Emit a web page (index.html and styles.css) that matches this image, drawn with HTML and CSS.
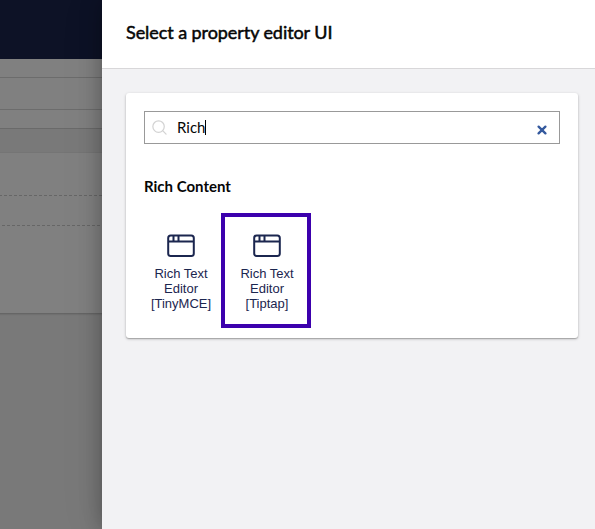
FILE: index.html
```html
<!DOCTYPE html>
<html lang="en">
<head>
<meta charset="utf-8">
<title>Select a property editor UI</title>
<link rel="stylesheet" href="styles.css">
</head>
<body>
<div class="app">
  <div class="backdrop">
    <div class="topbar"></div>
    <div class="row row-header"></div>
    <div class="row row-tabs"></div>
    <div class="row row-sub"></div>
    <div class="row row-gap"></div>
    <div class="row row-field"></div>
    <div class="row row-slot"></div>
    <div class="row row-body"></div>
  </div>
  <main class="panel">
    <header class="panel-header"><h1>Select a property editor UI</h1></header>
    <section class="box">
      <div class="search">
        <svg class="search-icon" viewBox="0 0 16 16"><circle cx="7" cy="7" r="6.1"/><path d="M11.4 11.4 15 15"/></svg>
        <span class="search-text">Rich</span><span class="caret"></span>
        <svg class="clear" viewBox="0 0 10 10"><path d="M1.6 1.6 8.4 8.4M8.4 1.6 1.6 8.4"/></svg>
      </div>
      <h2>Rich Content</h2>
      <div class="items">
        <div class="item">
          <svg class="item-icon" viewBox="0 0 28 24"><rect x="1.2" y="1.5" width="25.6" height="20.5" rx="2.5"/><path d="M1.5 7.5h25M6.5 2v5M11.5 2v5"/></svg>
          <span>Rich Text<br>Editor<br>[TinyMCE]</span>
        </div>
        <div class="item item-selected">
          <svg class="item-icon" viewBox="0 0 28 24"><rect x="1.2" y="1.5" width="25.6" height="20.5" rx="2.5"/><path d="M1.5 7.5h25M6.5 2v5M11.5 2v5"/></svg>
          <span>Rich Text<br>Editor<br>[Tiptap]</span>
        </div>
      </div>
    </section>
  </main>
</div>
</body>
</html>
```
FILE: styles.css
```css
* { box-sizing: border-box; }
body { margin: 0; font-family: Lato, "Liberation Sans", sans-serif; color: #060606; }
.app { display: flex; width: 595px; height: 529px; overflow: hidden; }
.backdrop { width: 102px; background: #797979; }
.topbar { height: 59px; background: #0d1226; }
.row { background: #808080; }
.row-header { height: 19px; border-bottom: 1px solid #6c6c6c; }
.row-tabs { height: 32px; border-bottom: 1px solid #6c6c6c; }
.row-sub { height: 19px; border-bottom: 1px solid #6a6a6a; }
.row-gap { height: 24px; background: #797979; border-bottom: 1px solid #757575; }
.row-field { height: 42px; }
.row-slot {
  height: 31px;
  background:
    repeating-linear-gradient(90deg, #666 0 2px, transparent 2px 4px, #666 4px 5px) 0 0 / 100% 1px no-repeat,
    repeating-linear-gradient(90deg, transparent 0 2px, #666 2px 5px) 0 100% / 100% 1px no-repeat,
    #808080;
}
.row-body { height: 88px; border-bottom: 1px solid #666; box-shadow: 0 1px 1px #707070; }
.panel {
  position: relative;
  width: 493px;
  background: #f2f2f4;
  box-shadow: 0 0 20px rgba(0, 0, 0, .3), 0 0 44px rgba(0, 0, 0, .08);
}
.panel-header {
  display: flex;
  align-items: center;
  height: 69px;
  padding: 0 24px 4px;
  background: #fff;
  border-bottom: 1px solid #d8d7d9;
}
h1 {
  margin: 0;
  font-size: 18px;
  line-height: 24px;
  font-weight: 400;
  letter-spacing: -.07px;
  -webkit-text-stroke: .5px currentColor;
}
.box {
  width: 452px;
  height: 245px;
  margin: 24px 0 0 24px;
  padding: 18px;
  background: #fff;
  border-radius: 3px;
  box-shadow: 0 1px 3px rgba(0, 0, 0, .25), 0 1px 1px rgba(0, 0, 0, .18);
}
.search { display: flex; align-items: center; height: 33px; padding: 0 12px 0 7px; border: 1px solid #999; }
.search-icon { width: 15px; height: 15px; fill: none; stroke: #d3d3d3; stroke-width: 1.3; stroke-linecap: round; }
.search-text { margin: -1px 0 0 10px; font-size: 15px; line-height: 20px; }
.caret { width: 1px; height: 15px; background: #000; }
.clear { width: 10px; height: 10px; margin: 5px 0 0 auto; fill: none; stroke: #34599e; stroke-width: 2.3; stroke-linecap: round; }
h2 { margin: 32px 0 0; font-size: 15px; line-height: 20px; font-weight: 700; }
.items { display: flex; margin: 17px 0 0 -6px; }
.item {
  display: flex;
  flex-direction: column;
  align-items: center;
  width: 86px;
  height: 115px;
  padding-top: 21px;
  color: #1b264f;
  font: 13px/15px "Liberation Sans", sans-serif;
  text-align: center;
}
.item-selected { width: 90px; margin-left: -3px; padding: 17px 0 0 2px; border: 4px solid #3c00ad; }
.item-icon { width: 28px; height: 24px; margin-bottom: 8px; fill: none; stroke: #1b264f; stroke-width: 2; }
```
